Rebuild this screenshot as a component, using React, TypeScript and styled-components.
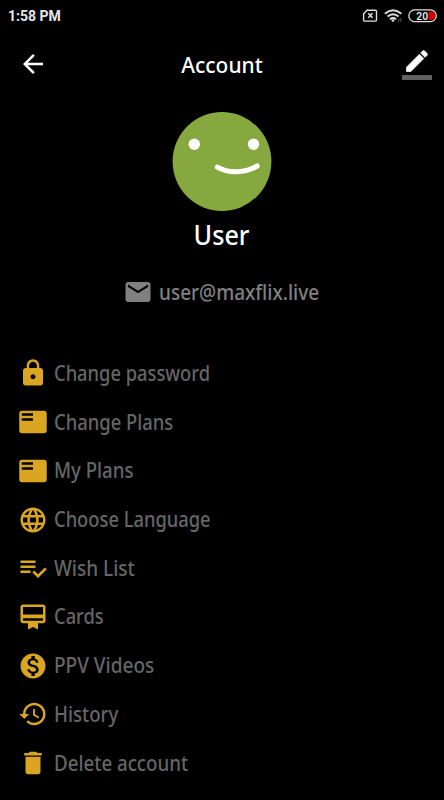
import React from "react";
import styled, { createGlobalStyle } from "styled-components";

const GlobalStyle = createGlobalStyle`
  * { box-sizing: border-box; }
  body { margin: 0; background: #000; }
`;

const Screen = styled.main`
  width: 444px;
  height: 800px;
  display: flex;
  flex-direction: column;
  overflow: hidden;
  background: #000;
  color: #fff;
  font-family: "Noto Sans", "Open Sans", sans-serif;
`;

const StatusBar = styled.div`
  height: 32px;
  flex: none;
  display: flex;
  align-items: center;
  justify-content: space-between;
  padding: 0 6px 0 8px;
`;

const Clock = styled.span`
  font: 700 14px/32px Roboto, sans-serif;
  color: #e6e6e6;
`;

const StatusIcons = styled.div`
  display: flex;
  align-items: center;
`;

const Header = styled.header`
  height: 66px;
  flex: none;
  display: grid;
  grid-template-columns: 80px 1fr 80px;
  align-items: center;
`;

const IconButton = styled.button`
  border: 0;
  padding: 0;
  background: none;
  color: #fff;
  display: flex;
  flex-direction: column;
  width: 30px;
`;

const BackButton = styled(IconButton)`
  margin: 0 0 2px 18px;
`;

const EditButton = styled(IconButton)`
  justify-self: end;
  align-items: center;
  margin: 0 12px 4px 0;
  border-bottom: 5px solid #616161;
  stroke: #fff;
  stroke-width: 0.6px;
`;

const Title = styled.h1`
  margin: 0;
  text-align: center;
  font-size: 21.5px;
  line-height: 30px;
  font-weight: 500;
  transform: scaleX(0.975);
`;

const Profile = styled.section`
  flex: none;
  height: 251px;
  display: flex;
  flex-direction: column;
  align-items: center;
  padding-top: 13px;
`;

const Name = styled.h2`
  margin: 4px 0 0;
  font-size: 27.5px;
  line-height: 40px;
  font-weight: 500;
  transform: scaleX(0.915);
`;

const Email = styled.div`
  display: flex;
  align-items: center;
  gap: 6px;
  width: 198px;
  height: 30px;
  margin-top: 22px;
  color: #808080;
`;

const Menu = styled.ul`
  list-style: none;
  margin: 0;
  padding: 0 0 0 18px;
`;

const MenuItem = styled.li`
  height: 48.72px;
  display: flex;
  align-items: center;
  gap: 6px;
  color: #daa520;
`;

const Label = styled.span<{ $condense: number }>`
  margin-bottom: 1px;
  font-size: 21px;
  font-weight: 500;
  line-height: 30px;
  white-space: nowrap;
  transform: scaleX(${(p) => p.$condense});
  transform-origin: left center;
`;

const MenuLabel = styled(Label)`
  color: #666;
`;

const Glyph = styled.svg`
  flex: none;
  fill: currentColor;
`;

const Icon = ({ d, size = 30 }: { d: string; size?: number }) => (
  <Glyph width={size} height={size} viewBox="0 0 24 24">
    <path d={d} />
  </Glyph>
);

const paths = {
  back: "M20 11H7.83l5.59-5.59L12 4l-8 8 8 8 1.41-1.41L7.83 13H20v-2z",
  edit: "M3 17.25V21h3.75L17.81 9.94l-3.75-3.75L3 17.25zM20.71 7.04c.39-.39.39-1.02 0-1.41l-2.34-2.34c-.39-.39-1.02-.39-1.41 0l-1.83 1.83 3.75 3.75 1.83-1.83z",
  mail: "M20 4H4c-1.1 0-1.99.9-1.99 2L2 18c0 1.1.9 2 2 2h16c1.1 0 2-.9 2-2V6c0-1.1-.9-2-2-2zm0 4l-8 5-8-5V6l8 5 8-5v2z",
  lock: "M18 8h-1V6c0-2.76-2.24-5-5-5S7 3.24 7 6v2H6c-1.1 0-2 .9-2 2v10c0 1.1.9 2 2 2h12c1.1 0 2-.9 2-2V10c0-1.1-.9-2-2-2zm-6 9c-1.1 0-2-.9-2-2s.9-2 2-2 2 .9 2 2-.9 2-2 2zm3.1-9H8.9V6c0-1.71 1.39-3.1 3.1-3.1 1.71 0 3.1 1.39 3.1 3.1v2z",
  plans: "M21 3H3c-1.1 0-2 .9-2 2v14c0 1.1.9 2 2 2h18c1.1 0 2-.9 2-2V5c0-1.1-.9-2-2-2zm-9 8H3V9h9v2zm0-4H3V5h9v2z",
  globe: "M11.99 2C6.47 2 2 6.48 2 12s4.47 10 9.99 10C17.52 22 22 17.52 22 12S17.52 2 11.99 2zm6.93 6h-2.95c-.32-1.25-.78-2.45-1.38-3.56 1.84.63 3.37 1.91 4.33 3.56zM12 4.04c.83 1.2 1.48 2.53 1.91 3.96h-3.82c.43-1.43 1.08-2.76 1.91-3.96zM4.26 14C4.1 13.36 4 12.69 4 12s.1-1.36.26-2h3.38c-.08.66-.14 1.32-.14 2 0 .68.06 1.34.14 2H4.26zm.82 2h2.95c.32 1.25.78 2.45 1.38 3.56-1.84-.63-3.37-1.9-4.33-3.56zm2.95-8H5.08c.96-1.66 2.49-2.93 4.33-3.56C8.81 5.55 8.35 6.75 8.03 8zM12 19.96c-.83-1.2-1.48-2.53-1.91-3.96h3.82c-.43 1.43-1.08 2.76-1.91 3.96zM14.34 14H9.66c-.09-.66-.16-1.32-.16-2 0-.68.07-1.35.16-2h4.68c.09.65.16 1.32.16 2 0 .68-.07 1.34-.16 2zm.25 5.56c.6-1.11 1.06-2.31 1.38-3.56h2.95c-.96 1.65-2.49 2.93-4.33 3.56zM16.36 14c.08-.66.14-1.32.14-2 0-.68-.06-1.34-.14-2h3.38c.16.64.26 1.31.26 2s-.1 1.36-.26 2h-3.38z",
  wish: "M14 10H2v2h12v-2zm0-4H2v2h12V6zM2 16h8v-2H2v2zm19.5-4.5L23 13l-6.99 7-4.51-4.5L13 14l3.01 3 5.49-5.5z",
  cards: "M20 2H4c-1.11 0-2 .89-2 2v11c0 1.11.89 2 2 2h4v5l4-2 4 2v-5h4c1.11 0 2-.89 2-2V4c0-1.11-.89-2-2-2zm0 13H4v-2h16v2zm0-5H4V4h16v6z",
  money: "M12 2C6.48 2 2 6.48 2 12s4.48 10 10 10 10-4.48 10-10S17.52 2 12 2zm1.41 16.09V20h-2.67v-1.93c-1.71-.36-3.16-1.46-3.27-3.4h1.96c.1 1.05.82 1.87 2.65 1.87 1.96 0 2.4-.98 2.4-1.59 0-.83-.44-1.61-2.67-2.14-2.48-.6-4.18-1.62-4.18-3.67 0-1.72 1.39-2.84 3.11-3.21V4h2.67v1.95c1.86.45 2.79 1.86 2.85 3.39H14.3c-.05-1.11-.64-1.87-2.22-1.87-1.5 0-2.4.68-2.4 1.64 0 .84.65 1.39 2.67 1.91s4.18 1.39 4.18 3.91c-.01 1.83-1.38 2.83-3.12 3.16z",
  history: "M13 3c-4.97 0-9 4.03-9 9H1l3.89 3.89.07.14L9 12H6c0-3.87 3.13-7 7-7s7 3.13 7 7-3.13 7-7 7c-1.93 0-3.68-.79-4.94-2.06l-1.42 1.42C8.27 19.99 10.51 21 13 21c4.97 0 9-4.03 9-9s-4.03-9-9-9zm-1 5v5l4.28 2.54.72-1.21-3.5-2.08V8H12z",
  trash: "M6 19c0 1.1.9 2 2 2h8c1.1 0 2-.9 2-2V7H6v12zM19 4h-3.5l-1-1h-5l-1 1H5v2h14V4z",
};

const items = [
  { icon: paths.lock, label: "Change password", condense: 0.872 },
  { icon: paths.plans, label: "Change Plans", condense: 0.876 },
  { icon: paths.plans, label: "My Plans", condense: 0.886 },
  { icon: paths.globe, label: "Choose Language", condense: 0.872 },
  { icon: paths.wish, label: "Wish List", condense: 0.904 },
  { icon: paths.cards, label: "Cards", condense: 0.872 },
  { icon: paths.money, label: "PPV Videos", condense: 0.906 },
  { icon: paths.history, label: "History", condense: 0.887 },
  { icon: paths.trash, label: "Delete account", condense: 0.891 },
];

const StatusGlyphs = () => (
  <svg width="76" height="16" viewBox="0 0 76 16" fill="none" stroke="#dedede">
    <path d="M5 2.3h8.5q1 0 1 1v8.8q0 1-1 1H2.6q-1 0-1-1V5.7z" strokeWidth="1.4" />
    <path d="M6.3 5.3l4.2 4.4M10.5 5.3L6.3 9.7" strokeWidth="1.6" />
    <path d="M22.9 5.7Q31-1.1 39.4 5.7M25.5 8.6Q31 4 36.6 8.6M28 11.3Q31 8.9 34 11.3" strokeWidth="2" />
    <path d="M29.3 12.3Q31 10.9 32.7 12.3L31 14.3z" fill="#dedede" stroke="none" />
    <path d="M36.8 11v3M38.8 10v4" strokeWidth=".8" stroke="#666" />
    <path d="M66.5 3.5h2.5a4.3 4.3 0 0 1 0 8.6H66.5z" fill="#d90000" stroke="none" />
    <rect x="46.8" y="1.9" width="27.5" height="11.7" rx="5.85" strokeWidth="1.3" />
    <text x="54.3" y="11.9" fill="#e6e6e6" stroke="none" fontFamily="Roboto, sans-serif" fontSize="11.5" fontWeight="600" textLength="11.8" lengthAdjust="spacingAndGlyphs">20</text>
  </svg>
);

const Avatar = () => (
  <svg width="100" height="100" viewBox="0 0 100 100">
    <circle cx="50" cy="50.5" r="49.4" fill="#86a83f" />
    <circle cx="22.3" cy="33.3" r="5.7" fill="#fff" />
    <circle cx="81.5" cy="33.3" r="5.7" fill="#fff" />
    <path d="M45.3 56.2C56 62.5 73 62.5 85.2 55" fill="none" stroke="#fff" strokeWidth="5" strokeLinecap="round" />
  </svg>
);

export default function App() {
  return (
    <>
      <GlobalStyle />
      <Screen>
        <StatusBar>
          <Clock>1:58 PM</Clock>
          <StatusIcons><StatusGlyphs /></StatusIcons>
        </StatusBar>
        <Header>
          <BackButton aria-label="Back"><Icon d={paths.back} /></BackButton>
          <Title>Account</Title>
          <EditButton aria-label="Edit"><Icon d={paths.edit} size={28} /></EditButton>
        </Header>
        <Profile>
          <Avatar />
          <Name>User</Name>
          <Email>
            <Icon d={paths.mail} />
            <Label $condense={0.905}>user@maxflix.live</Label>
          </Email>
        </Profile>
        <Menu>
          {items.map((item) => (
            <MenuItem key={item.label}>
              <Icon d={item.icon} />
              <MenuLabel $condense={item.condense}>{item.label}</MenuLabel>
            </MenuItem>
          ))}
        </Menu>
      </Screen>
    </>
  );
}
